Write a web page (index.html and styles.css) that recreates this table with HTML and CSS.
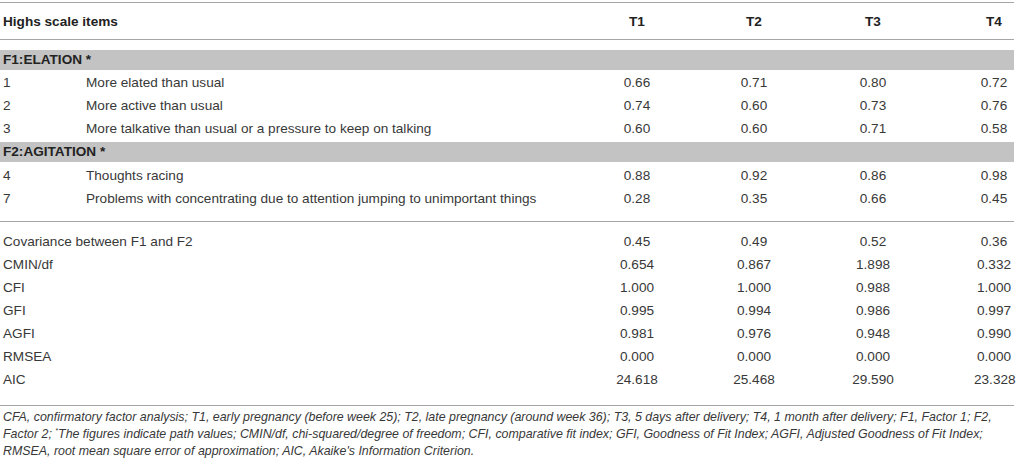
FILE: index.html
```html
<!DOCTYPE html>
<html>
<head>
<meta charset="utf-8">
<link rel="stylesheet" href="styles.css">
</head>
<body>
<div class="wrap">
<table class="tbl">
  <colgroup>
    <col class="c-num"><col class="c-desc"><col class="c-t1"><col class="c-t2"><col class="c-t3"><col class="c-t4">
  </colgroup>
  <thead>
    <tr class="head">
      <th colspan="2" class="left">Highs scale items</th>
      <th>T1</th><th>T2</th><th>T3</th><th class="t4">T4</th>
    </tr>
  </thead>
  <tbody>
    <tr class="spacer"><td colspan="6"></td></tr>
    <tr class="band"><td colspan="6"><div class="band-bar">F1:ELATION *</div></td></tr>
    <tr><td class="num">1</td><td class="desc">More elated than usual</td><td>0.66</td><td>0.71</td><td>0.80</td><td class="t4">0.72</td></tr>
    <tr><td class="num">2</td><td class="desc">More active than usual</td><td>0.74</td><td>0.60</td><td>0.73</td><td class="t4">0.76</td></tr>
    <tr><td class="num">3</td><td class="desc">More talkative than usual or a pressure to keep on talking</td><td>0.60</td><td>0.60</td><td>0.71</td><td class="t4">0.58</td></tr>
    <tr class="band band2"><td colspan="6"><div class="band-bar">F2:AGITATION *</div></td></tr>
    <tr><td class="num">4</td><td class="desc">Thoughts racing</td><td>0.88</td><td>0.92</td><td>0.86</td><td class="t4">0.98</td></tr>
    <tr class="last-item"><td class="num">7</td><td class="desc">Problems with concentrating due to attention jumping to unimportant things</td><td>0.28</td><td>0.35</td><td>0.66</td><td class="t4">0.45</td></tr>
  </tbody>
  <tbody class="fit">
    <tr class="first-fit"><td colspan="2">Covariance between F1 and F2</td><td>0.45</td><td>0.49</td><td>0.52</td><td class="t4">0.36</td></tr>
    <tr><td colspan="2">CMIN/df</td><td>0.654</td><td>0.867</td><td>1.898</td><td class="t4">0.332</td></tr>
    <tr><td colspan="2">CFI</td><td>1.000</td><td>1.000</td><td>0.988</td><td class="t4">1.000</td></tr>
    <tr><td colspan="2">GFI</td><td>0.995</td><td>0.994</td><td>0.986</td><td class="t4">0.997</td></tr>
    <tr><td colspan="2">AGFI</td><td>0.981</td><td>0.976</td><td>0.948</td><td class="t4">0.990</td></tr>
    <tr><td colspan="2">RMSEA</td><td>0.000</td><td>0.000</td><td>0.000</td><td class="t4">0.000</td></tr>
    <tr class="last-fit"><td colspan="2">AIC</td><td>24.618</td><td>25.468</td><td>29.590</td><td class="t4">23.328</td></tr>
  </tbody>
</table>
<p class="note">CFA, confirmatory factor analysis; T1, early pregnancy (before week 25); T2, late pregnancy (around week 36); T3, 5 days after delivery; T4, 1 month after delivery; F1, Factor 1; F2, Factor 2; <sup>*</sup>The figures indicate path values; CMIN/df, chi-squared/degree of freedom; CFI, comparative fit index; GFI, Goodness of Fit Index; AGFI, Adjusted Goodness of Fit Index; RMSEA, root mean square error of approximation; AIC, Akaike's Information Criterion.</p>
</div>
</body>
</html>
```

FILE: styles.css
```css
html, body {
  margin: 0;
  padding: 0;
  background: #ffffff;
}

body {
  font-family: "Liberation Sans", Arial, sans-serif;
  color: #383838;
}

.wrap {
  width: 1014px;
  padding-top: 2px;
}

.tbl {
  width: 1014px;
  border-collapse: collapse;
  table-layout: fixed;
  font-size: 13.6px;
}

.c-num { width: 86px; }
.c-desc { width: 492px; }
.c-t1 { width: 118px; }
.c-t2 { width: 116px; }
.c-t3 { width: 122px; }
.c-t4 { width: 80px; }

.tbl td, .tbl th {
  padding: 0;
  height: 23px;
  text-align: center;
  vertical-align: middle;
  white-space: nowrap;
}

.tbl td:first-child, .tbl th:first-child {
  text-align: left;
  padding-left: 3px;
}

.tbl td.desc {
  text-align: left;
}

.tbl .t4 {
  padding-left: 40px;
}

.head th {
  height: 36px;
  font-weight: bold;
  color: #222222;
  border-top: 1px solid #a6a6a6;
  border-bottom: 1px solid #a6a6a6;
}

.spacer td {
  height: 8px;
}

.band td {
  padding-left: 0 !important;
  height: 23px;
}

.band2 td {
  height: 24px;
}

.band-bar {
  background: #c3c3c3;
  height: 20px;
  line-height: 20px;
  padding-left: 3px;
  font-weight: bold;
  color: #222222;
}

.last-item td {
  padding-bottom: 11px;
  border-bottom: 1px solid #a6a6a6;
}

.first-fit td {
  padding-top: 8px;
}

.last-fit td {
  padding-bottom: 14px;
  border-bottom: 1px solid #a6a6a6;
}

.note {
  margin: 3px 0 0 0;
  padding-left: 3px;
  font-size: 12.4px;
  line-height: 17px;
  font-style: italic;
  color: #383838;
}

.note sup {
  font-size: 7px;
  vertical-align: 5px;
  line-height: 0;
}
```
